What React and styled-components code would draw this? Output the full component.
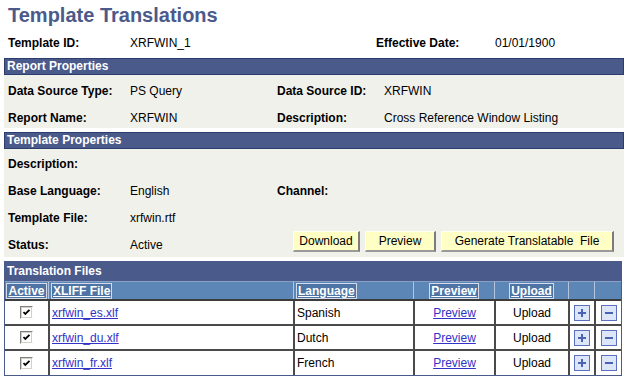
import styled, { createGlobalStyle } from "styled-components";

const files = [
  { file: "xrfwin_es.xlf", lang: "Spanish" },
  { file: "xrfwin_du.xlf", lang: "Dutch" },
  { file: "xrfwin_fr.xlf", lang: "French" },
];

const cols = "43px 245px 120px 81px 74px 26px 27px";

function CheckBox() {
  return (
    <svg width="13" height="13" viewBox="0 0 13 13">
      <rect x="0" y="0" width="13" height="13" fill="#d4d0c8" />
      <path d="M0 13V0h13" fill="none" stroke="#808080" strokeWidth="2" />
      <path d="M0.5 12.5h12v-12" fill="none" stroke="#ffffff" strokeWidth="1" />
      <rect x="2" y="2" width="9" height="9" fill="#fff" />
      <path d="M3.5 6 L5.3 8 L9.5 3.8" fill="none" stroke="#000" strokeWidth="1.8" />
    </svg>
  );
}

function RowIcon({ plus }) {
  return (
    <svg width="16" height="16" viewBox="0 0 16 16">
      <rect x="0.5" y="0.5" width="15" height="15" fill="#dde6f9" stroke="#5a70c0" />
      <path d="M4 8h8" stroke="#4a62b2" strokeWidth="2" />
      {plus && <path d="M8 4v8" stroke="#4a62b2" strokeWidth="2" />}
    </svg>
  );
}

export default function App() {
  return (
    <>
      <GlobalStyle />
      <Page>
        <Title>Template Translations</Title>

        <TopRow>
          <Label>Template ID:</Label>
          <span>XRFWIN_1</span>
          <Label>Effective Date:</Label>
          <span>01/01/1900</span>
        </TopRow>

        <Bar>Report Properties</Bar>
        <Panel $pad="6px 0 0 4px">
          <Label>Data Source Type:</Label>
          <span>PS Query</span>
          <Label>Data Source ID:</Label>
          <span>XRFWIN</span>
          <Label>Report Name:</Label>
          <span>XRFWIN</span>
          <Label>Description:</Label>
          <span>Cross Reference Window Listing</span>
        </Panel>

        <Bar $top={4}>Template Properties</Bar>
        <Panel $pad="5px 0 2px 4px">
          <Label>Description:</Label>
          <span />
          <span />
          <span />
          <Label>Base Language:</Label>
          <span>English</span>
          <Label>Channel:</Label>
          <span />
          <Label>Template File:</Label>
          <span>xrfwin.rtf</span>
          <span />
          <span />
          <Label>Status:</Label>
          <span>Active</span>
          <ButtonBar>
            <Button $w={67}>Download</Button>
            <Button $w={71}>Preview</Button>
            <Button $w={173}>Generate Translatable&nbsp; File</Button>
          </ButtonBar>
        </Panel>

        <Grid>
          <GridTitle>Translation Files</GridTitle>
          <HeadRow>
            <HeadCell $align="center">
              <HeadLabel>Active</HeadLabel>
            </HeadCell>
            <HeadCell>
              <HeadLabel>XLIFF File</HeadLabel>
            </HeadCell>
            <HeadCell>
              <HeadLabel>Language</HeadLabel>
            </HeadCell>
            <HeadCell $align="center">
              <HeadLabel>Preview</HeadLabel>
            </HeadCell>
            <HeadCell $align="center">
              <HeadLabel>Upload</HeadLabel>
            </HeadCell>
            <HeadCell />
            <HeadCell />
          </HeadRow>
          {files.map((f, i) => (
            <DataRow key={f.file} $last={i === files.length - 1}>
              <Cell $align="center">
                <CheckBox />
              </Cell>
              <Cell>
                <Link>{f.file}</Link>
              </Cell>
              <Cell>{f.lang}</Cell>
              <Cell $align="center">
                <Link>Preview</Link>
              </Cell>
              <Cell $align="center">Upload</Cell>
              <Cell $align="center">
                <RowIcon plus />
              </Cell>
              <Cell $align="center">
                <RowIcon />
              </Cell>
            </DataRow>
          ))}
        </Grid>
      </Page>
    </>
  );
}

const GlobalStyle = createGlobalStyle`
  body {
    margin: 0;
    background: #fff;
    font-family: "Liberation Sans", Arial, sans-serif;
    font-size: 12px;
    color: #000;
  }
`;

const Page = styled.div`
  width: 620px;
  padding: 3px 0 0 4px;
`;

const Title = styled.h1`
  margin: 0 0 0 4px;
  height: 24px;
  font-size: 20px;
  line-height: 24px;
  font-weight: bold;
  color: #4b5a8a;
`;

const Label = styled.span`
  font-weight: bold;
`;

const TopRow = styled.div`
  display: grid;
  grid-template-columns: 122px 246px 119px auto;
  align-items: center;
  height: 20px;
  margin: 6px 0 5px;
  padding-left: 4px;
`;

const Bar = styled.div`
  box-sizing: border-box;
  height: 17px;
  margin-top: ${(p) => p.$top || 0}px;
  padding-left: 2px;
  background: #4a5a8b;
  border: 1px solid #2c3c6e;
  color: #fff;
  font-weight: bold;
  line-height: 15px;
`;

const Panel = styled.div`
  display: grid;
  grid-template-columns: 122px 147px 107px auto;
  grid-auto-rows: 20px;
  row-gap: 7px;
  align-items: center;
  padding: ${(p) => p.$pad};
  background: #f1f1ec;
`;

const ButtonBar = styled.div`
  grid-column: 3 / 5;
  display: flex;
  gap: 5px;
  align-self: start;
  margin-top: -4px;
  padding-left: 16px;
`;

const Button = styled.div`
  box-sizing: border-box;
  width: ${(p) => p.$w}px;
  height: 21px;
  background: #fffec4;
  border-top: 1px solid #fffff0;
  border-left: 1px solid #fffff0;
  border-right: 2px solid #7c7c7c;
  border-bottom: 2px solid #9a9a9a;
  color: #000;
  text-align: center;
  line-height: 18px;
`;

const Grid = styled.div`
  width: 618px;
  margin-top: 4px;
  border: 1px solid #4a5a8b;
  border-top: none;
  box-sizing: border-box;
`;

const GridTitle = styled.div`
  height: 20px;
  margin: 0 -1px;
  padding-left: 3px;
  background: #4a5a8b;
  color: #fff;
  font-weight: bold;
  line-height: 20px;
`;

const HeadRow = styled.div`
  display: grid;
  grid-template-columns: ${cols};
  box-sizing: border-box;
  height: 20px;
  background: #5b86b6;
  border-top: 1px solid #8aa0c4;
  border-bottom: 2px solid #3c3c3c;
`;

const HeadCell = styled.div`
  display: flex;
  align-items: center;
  justify-content: ${(p) => (p.$align === "center" ? "center" : "flex-start")};
  padding-left: ${(p) => (p.$align === "center" ? 0 : 2)}px;
  border-left: 1px solid #b4c4dc;
  &:first-child {
    border-left: none;
  }
`;

const HeadLabel = styled.span`
  padding: 0 1px;
  border: 1px solid #d3dbea;
  background: #4d74a4;
  color: #fff;
  font-weight: bold;
  text-decoration: underline;
  line-height: 14px;
`;

const DataRow = styled.div`
  display: grid;
  grid-template-columns: ${cols};
  height: ${(p) => (p.$last ? 24 : 25)}px;
  box-sizing: border-box;
  border-bottom: ${(p) => (p.$last ? "none" : "2px solid #4a4a4a")};
  background: #fff;
`;

const Cell = styled.div`
  display: flex;
  align-items: center;
  justify-content: ${(p) => (p.$align === "center" ? "center" : "flex-start")};
  padding-left: ${(p) => (p.$align === "center" ? 0 : 2)}px;
  border-left: 2px solid #4a4a4a;
  &:first-child {
    border-left: none;
  }
`;

const Link = styled.a`
  color: #3232c6;
  text-decoration: underline;
  cursor: pointer;
`;
